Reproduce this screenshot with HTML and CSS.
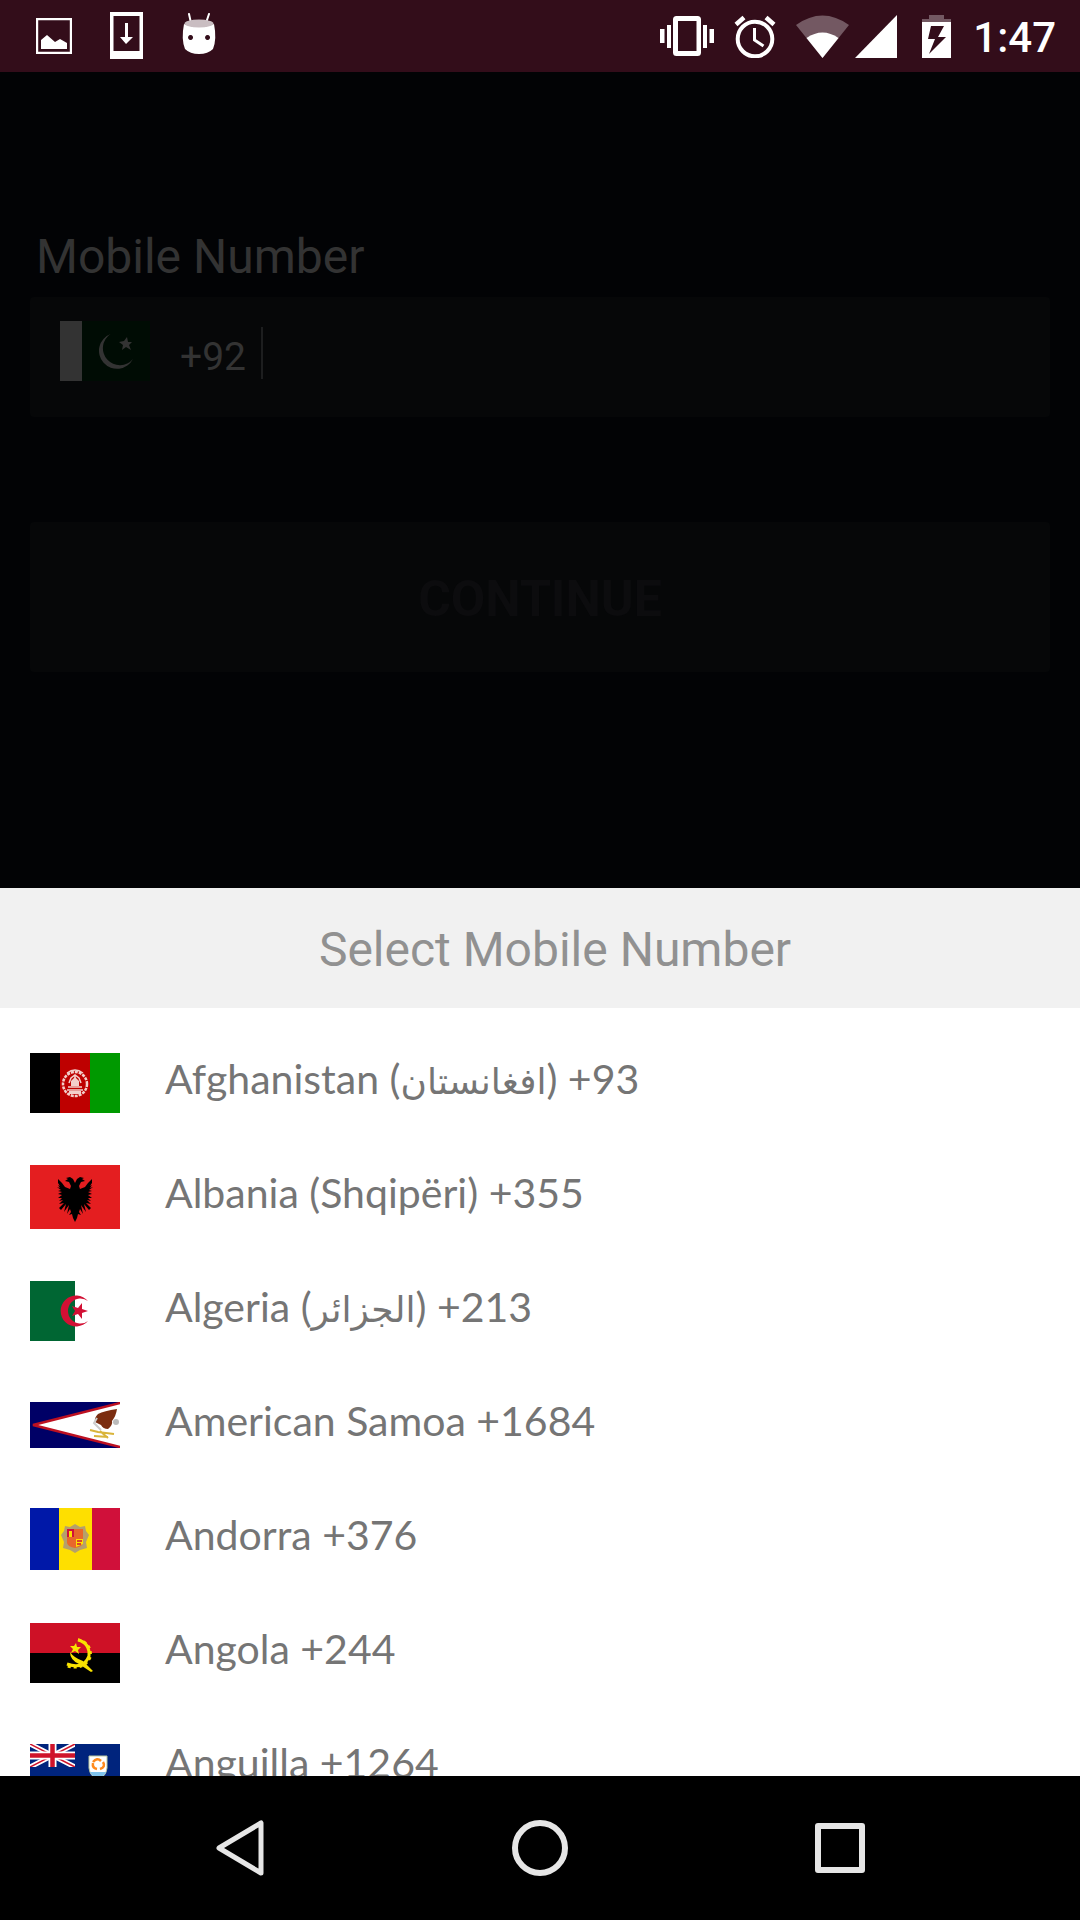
FILE: index.html
```html
<!DOCTYPE html>
<html lang="en">
<head>
<meta charset="utf-8">
<meta name="viewport" content="width=device-width, initial-scale=1">
<title>Select Mobile Number</title>
<link rel="stylesheet" href="styles.css">
</head>
<body>
<header class="status-bar">
  <div class="notifications">
    <svg width="36" height="36" viewBox="0 0 36 36"><path d="M1 1h34v34H1z" fill="none" stroke="#fff" stroke-width="2.4"/><path d="M5 31v-9l6-5 8 7 5-3 7 4v6z" fill="#fff"/></svg>
    <svg width="33" height="48" viewBox="0 0 33 48"><path fill="#fff" fill-rule="evenodd" d="M0 0h33v47H0zM3.500 4v35h26V4z"/><path d="M15 11h3v14h5l-7 7-6-7h5z" fill="#fff"/></svg>
    <svg width="36" height="46" viewBox="0 0 36 46"><path d="M8 1l2 9M28 1l-3 9" stroke="#fff" stroke-width="2" stroke-linecap="round"/><path fill="#fff" fill-rule="evenodd" d="M3 11Q18 17 33 11Q36 26 32 36Q27 41 18 41T4 36Q0 26 3 11zM9.500 22a2.500 2.500 0 1 0 .1 0zM26.500 22a2.500 2.500 0 1 0 .1 0z"/><ellipse cx="18" cy="10.500" rx="14.500" ry="4" fill="#c9bdc1"/></svg>
  </div>
  <div class="system">
    <svg width="54" height="42" viewBox="0 0 54 42"><path fill="#fff" fill-rule="evenodd" d="M16.500 1h21q3.500 0 3.500 3.500v33q0 3.500-3.500 3.500h-21q-3.500 0-3.500-3.500v-33Q13 1 16.500 1zM18 6v30h18.500V6zM0 14h4.500v14H0zM7 10h4v23H7zM43 10h4v23h-4zM49.500 14H54v14h-4.500z"/></svg>
    <svg width="42" height="43" viewBox="0 0 42 43"><g fill="none" stroke="#fff"><circle cx="21" cy="24" r="17.300" stroke-width="4"/><path d="M2 9.500l8-7M40 9.500l-8-7" stroke-width="4.500"/><path d="M20.500 13v12l9 6" stroke-width="3"/></g></svg>
    <svg class="wifi" width="53" height="43" viewBox="0 0 53 43"><path d="M0 10Q26.500-9 53 10L26.500 43z" fill="#735862"/><path d="M10.500 23Q26.500 12 42.500 23L26.500 43z" fill="#fff"/></svg>
    <svg class="signal" width="42" height="43" viewBox="0 0 42 43"><path d="M42 0v43H0z" fill="#fff"/></svg>
    <svg class="battery" width="29" height="43" viewBox="0 0 29 43"><path d="M7 0h15v4h7v3H0V4h7z" fill="#735862"/><path fill="#fff" fill-rule="evenodd" d="M0 7h29v36H0zM9 11L6 24h7L7 39 24 22h-8l6-11z"/></svg>
    <time class="clock">1:47</time>
  </div>
</header>

<main class="screen">
  <form class="login">
    <label class="login-label" for="phone">Mobile Number</label>
    <div class="phone-field">
      <svg width="90" height="60" viewBox="0 0 90 60"><path d="M0 0h90v60H0z" fill="#000c04"/><path d="M0 0h22v60H0z" fill="#333"/><path d="M50.500 13A18 18 0 1 0 73 38A17 17 0 1 1 50.500 13z" fill="#333"/><path d="M67 16l1 5 4 0-3 3 2 5-5-3-4 3 1-5-4-3 5-1z" fill="#333"/></svg>
      <span class="dial-code">+92</span>
      <span class="caret"></span>
      <input class="phone-input" id="phone" type="tel">
    </div>
    <button class="continue" type="button">CONTINUE</button>
  </form>

  <section class="sheet">
    <h1 class="sheet-title">Select Mobile Number</h1>
    <ul class="countries">
      <li><button class="country" type="button">
        <svg width="90" height="60" viewBox="0 0 90 60"><path d="M0 0h30v60H0z"/><path d="M30 0h30v60H30z" fill="#be0000"/><path d="M60 0h30v60H60z" fill="#090"/><g fill="none" stroke="#f3cfcb"><circle cx="45" cy="31" r="12" stroke-width="2.500" stroke-dasharray="3 1"/><path d="M37 37h16M38 34h14M39 30l2-5 4-3 4 3 2 5M45 22v7M37 20q8-6 16 0" stroke-width="1.500"/></g><path d="M41 33v-5l4-4 4 4v5zM39 38h12v3H39z" fill="#f3cfcb"/></svg>
        <span>Afghanistan (<bdi lang="fa">افغانستان</bdi>) +93</span></button></li>
      <li><button class="country" type="button">
        <svg width="90" height="64" viewBox="0 0 90 64"><path d="M0 0h90v64H0z" fill="#e41e20"/><g id="eagle-half"><path d="M45 18l-2-4-3-2-4 1 2 1-3 2 4 1 2 4-1 3-5-2-3-4-4-4v4l2 3-2-1 2 3-3-1 4 3-3 1 4 1-4 2 4 1-4 3h4l-3 3 4-1-4 4 5-1-5 5 2 2 5-6-2 8 5-7-2 9 3-5 1 3-2 3 3-1 1 4 2 4z"/></g><use href="#eagle-half" transform="matrix(-1 0 0 1 90 0)"/></svg>
        <span>Albania (Shqipëri) +355</span></button></li>
      <li><button class="country" type="button">
        <svg width="90" height="60" viewBox="0 0 90 60"><path d="M0 0h90v60H0z" fill="#fff"/><path d="M0 0h45v60H0z" fill="#063"/><path d="M58 20A15.500 15.500 0 1 0 58 40A12.500 12.500 0 1 1 58 20zM58 30l-6 2 0 6-4-5-6 2 3-5-3-5 6 2 4-5 0 6z" fill="#d21034"/></svg>
        <span>Algeria (<bdi lang="ar">الجزائر</bdi>) +213</span></button></li>
      <li><button class="country" type="button">
        <svg width="90" height="46" viewBox="0 0 90 46"><path d="M0 0h90v46H0z" fill="#006"/><path d="M94 0v46L3 23z" fill="#fff" stroke="#bd1021" stroke-width="2.500"/><path d="M87 7q-1 7-5 12 1 4-4 8-5 0-7-4l-6-3q-1-4 3-8 6-3 19-5z" fill="#7b2d10"/><path d="M67 16l-3 5 4 4 3 3" fill="none" stroke="#ccc" stroke-width="2"/><circle cx="86" cy="20" r="3" fill="#bbb"/><path d="M60 28l8 2 16 2M64 34l14 1M70 29l8 7" fill="none" stroke="#d9b43a" stroke-width="2"/></svg>
        <span>American Samoa +1684</span></button></li>
      <li><button class="country" type="button">
        <svg width="90" height="62" viewBox="0 0 90 62"><path d="M0 0h29v62H0z" fill="#0018a8"/><path d="M29 0h33v62H29z" fill="#fedf00"/><path d="M62 0h28v62H62z" fill="#d0103a"/><path d="M35 18l5 1 5-3 5 3 5-1 1 5 3 4-3 7 1 6-7 2-5 3-5-3-7-2 1-6-3-7 3-4z" fill="#b5a06b"/><path d="M37 21h16v14q-1 4-8 5-7-1-8-5z" fill="#e8672b"/><path d="M37 21h7v8h-7z" fill="#d0103a"/><path d="M39 23h3v6h-3zM46 31h7v5l-7 3z" fill="#fedf00"/><path d="M47 33h5M47 36h4" stroke="#d0103a" stroke-width="1.500"/></svg>
        <span>Andorra +376</span></button></li>
      <li><button class="country" type="button">
        <svg width="90" height="60" viewBox="0 0 90 60"><path d="M0 0h90v30H0z" fill="#ce1126"/><path d="M0 30h90v30H0z"/><path d="M48 17Q60 20 59 33Q54 47 37 41" fill="none" stroke="#f9e300" stroke-width="3"/><path d="M48 16.500Q62 20 60.500 34Q54 48 37 43" fill="none" stroke="#f9e300" stroke-width="2.500" stroke-dasharray="3 3"/><path d="M40 29q4 6 13 9l10 10-2 1-12-8q-9-4-9-12z" fill="#f9e300"/><path d="M46 20l1 4 4 0-3 3 1 4-4-3-4 2 2-4-3-3 4 0z" fill="#f9e300"/></svg>
        <span>Angola +244</span></button></li>
      <li><button class="country" type="button">
        <svg width="90" height="46" viewBox="0 0 90 46"><path d="M0 0h90v46H0z" fill="#00247d"/><path d="M0 0l45 23M45 0L0 23" stroke="#fff" stroke-width="5"/><path d="M0 0l45 23M45 0L0 23" stroke="#cf142b" stroke-width="1.500"/><path d="M22.500 0v23M0 11.500h45" stroke="#fff" stroke-width="8"/><path d="M22.500 0v23M0 11.500h45" stroke="#cf142b" stroke-width="4.500"/><path d="M0 23h46v23H0zM45 0h6v24h-6z" fill="#00247d"/><path d="M59 12h18v12q-1 9-9 11-8-2-9-11z" fill="#fff" stroke="#b9c7a0"/><path d="M60 28h16q-2 5-8 6-6-1-8-6z" fill="#7fc4ee"/><path d="M63 18q4-5 8-1M73 18q3 5-3 7M67 25q-5-1-4-6" fill="none" stroke="#ff8a1c" stroke-width="2.500"/></svg>
        <span>Anguilla +1264</span></button></li>
    </ul>
  </section>
</main>

<nav class="nav-bar">
  <button class="nav-button" type="button" aria-label="Back"><svg width="60" height="60" viewBox="0 0 60 60"><path d="M51 5v50L9 30z" fill="none" stroke="#e6e6e6" stroke-width="5" stroke-linejoin="round"/></svg></button>
  <button class="nav-button" type="button" aria-label="Home"><svg width="60" height="60" viewBox="0 0 60 60"><circle cx="30" cy="30" r="25" fill="none" stroke="#e6e6e6" stroke-width="6"/></svg></button>
  <button class="nav-button" type="button" aria-label="Recent apps"><svg width="60" height="60" viewBox="0 0 60 60"><path d="M8 8h44v44H8z" fill="none" stroke="#e6e6e6" stroke-width="6" stroke-linejoin="round"/></svg></button>
</nav>
</body>
</html>
```
FILE: styles.css
```css
* { box-sizing: border-box; }

body {
  margin: 0;
  height: 100vh;
  display: flex;
  flex-direction: column;
  background: #020305;
  font-family: Roboto, sans-serif;
}

button, input { font: inherit; color: inherit; border: 0; }

svg { display: block; flex: none; }

.status-bar {
  flex: none;
  height: 72px;
  padding: 0 24px 0 36px;
  display: flex;
  justify-content: space-between;
  align-items: center;
  background: #330d1a;
  color: #fff;
}

.notifications { display: flex; align-items: center; gap: 38px; }

.system { display: flex; align-items: center; gap: 20px; }
.signal { margin-left: -14px; }
.battery { margin-left: 5px; }

.clock { padding: 4px 0 0 2px; font-size: 42px; font-weight: 500; line-height: 48px; }

.screen {
  flex: 1;
  min-height: 0;
  display: flex;
  flex-direction: column;
}

.login {
  flex: none;
  display: flex;
  flex-direction: column;
  padding: 152px 30px 216px;
}

.login-label {
  padding: 5px 6px 12px;
  font-size: 48px;
  line-height: 56px;
  color: #333;
}

.phone-field {
  height: 120px;
  padding: 24px 30px;
  display: flex;
  align-items: flex-start;
  border-radius: 4px;
  background: #060708;
  color: #333;
}

.dial-code { margin-left: 30px; font-size: 39px; line-height: 72px; }
.caret { width: 2px; height: 52px; margin: 6px 0 0 15px; background: #1d1e1f; }
.phone-input { flex: 1; min-width: 0; height: 60px; background: none; outline: 0; font-size: 39px; }

.continue {
  height: 150px;
  margin-top: 105px;
  padding: 4px 0 0;
  border-radius: 4px;
  background: #060708;
  color: #0c0c0e;
  font-size: 50px;
  font-weight: 700;
}

.sheet {
  flex: 1;
  min-height: 0;
  display: flex;
  flex-direction: column;
  background: #fff;
}

.sheet-title {
  flex: none;
  margin: 0;
  padding: 34px 0 30px 30px;
  background: #f1f1f1;
  color: #919191;
  font-size: 48px;
  font-weight: 400;
  line-height: 56px;
  text-align: center;
}

.countries {
  flex: 1;
  min-height: 0;
  margin: 0;
  padding: 18px 0 0;
  list-style: none;
  overflow: hidden;
}

.country {
  width: 100%;
  height: 114px;
  padding: 0 30px;
  display: flex;
  align-items: center;
  gap: 45px;
  background: none;
  color: #757575;
  font-family: Lato, "DejaVu Sans", sans-serif;
  font-size: 41px;
  line-height: 48px;
  text-align: left;
}

.country span { padding-bottom: 8px; }
.country bdi { font-size: 36px; line-height: 40px; }

.nav-bar {
  flex: none;
  height: 144px;
  padding: 0 90px;
  display: flex;
  background: #000;
}

.nav-button {
  flex: 1;
  padding: 0;
  display: flex;
  align-items: center;
  justify-content: center;
  background: none;
}
```
